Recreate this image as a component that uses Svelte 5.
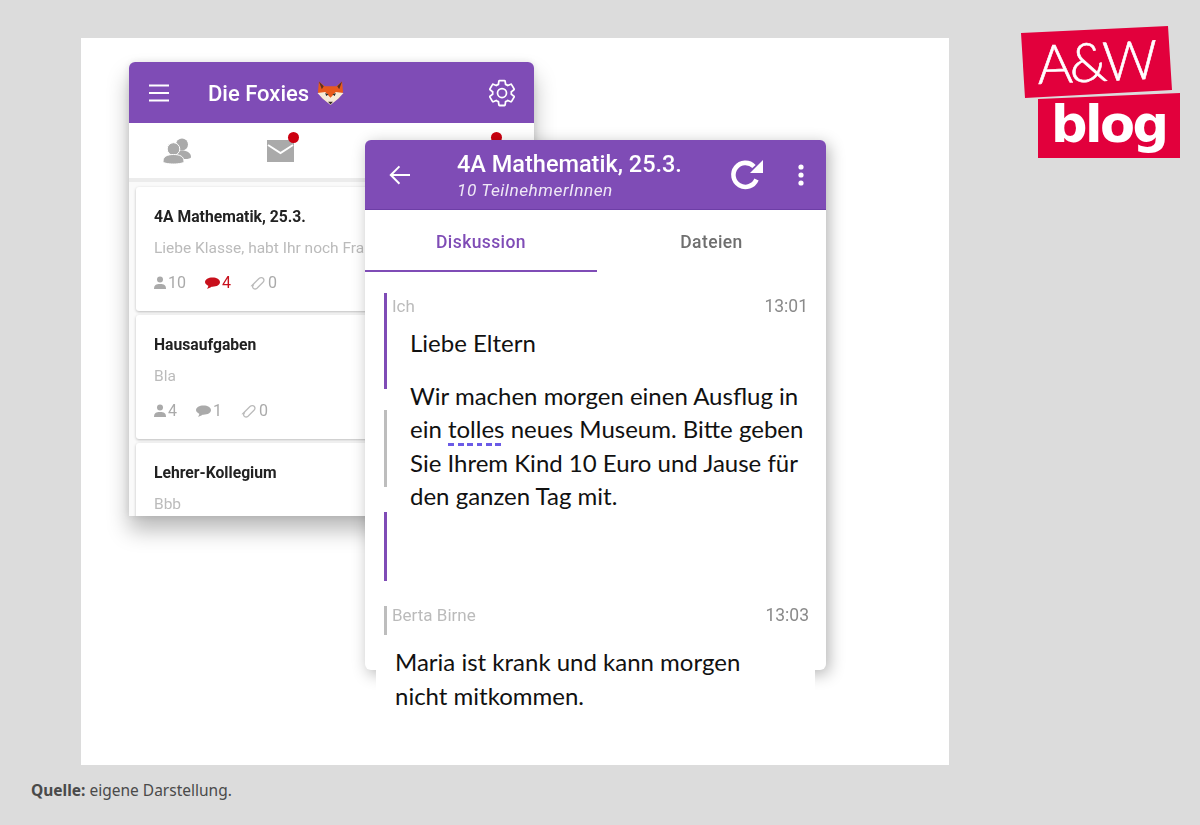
<script>
	const threads = [
		{ title: '4A Mathematik, 25.3.', text: 'Liebe Klasse, habt Ihr noch Fragen?', people: 10, chat: 4, files: 0, hot: true },
		{ title: 'Hausaufgaben', text: 'Bla', people: 4, chat: 1, files: 0, hot: false },
		{ title: 'Lehrer-Kollegium', text: 'Bbb' }
	];

	const bars = [
		{ top: 21, height: 96, cls: 'purple' },
		{ top: 138, height: 77, cls: 'grey' },
		{ top: 240, height: 69, cls: 'purple' },
		{ top: 334, height: 29, cls: 'grey' }
	];
</script>

<div class="page">
	<div class="panel">
		<section class="phone back">
			<header class="back-head">
				<svg class="burger" viewBox="0 0 20 18" width="20" height="18">
					<path d="M0 1.500h20M0 9h20M0 16.500h20" stroke="#fff" stroke-width="2" />
				</svg>
				<span class="back-title">Die Foxies</span>
				<svg class="fox" viewBox="0 0 28 26" width="27" height="26">
					<path d="M2 1l6 5h12l6-5 1 11-4 6-9 7-9-7-4-6z" fill="#e8591c" />
					<path d="M2 1l5 5-2 3zM26 1l-5 5 2 3z" fill="#5a3320" />
					<path d="M.500 13l8-1 5.500 6 5.500-6 8 1-5.500 6-8 6.500-8-6.500z" fill="#f7ead8" />
					<path d="M8.500 13l3.500 1.500-2.500 1.500zM19.500 13L16 14.500l2.500 1.500z" fill="#2b2b2b" />
					<path d="M11.500 22h5l-2.500 3z" fill="#3a2a24" />
				</svg>
				<svg class="gear" viewBox="0 0 24 24" width="30" height="30">
					<path
						d="M19.430 12.980c.040-.320.070-.640.070-.980s-.030-.660-.070-.980l2.110-1.650c.190-.150.240-.420.120-.640l-2-3.460c-.120-.220-.390-.300-.610-.220l-2.490 1c-.520-.400-1.080-.730-1.690-.980l-.380-2.650C14.460 2.180 14.250 2 14 2h-4c-.250 0-.460.180-.490.420l-.380 2.650c-.610.250-1.170.590-1.690.980l-2.490-1c-.230-.090-.490 0-.610.220l-2 3.460c-.130.220-.070.490.120.640l2.110 1.650c-.040.320-.070.650-.070.980s.030.660.070.980l-2.110 1.650c-.190.150-.240.420-.120.640l2 3.460c.120.220.390.300.610.220l2.490-1c.520.400 1.080.730 1.690.980l.380 2.650c.030.240.240.420.490.420h4c.250 0 .460-.180.490-.420l.380-2.650c.610-.250 1.170-.590 1.690-.980l2.490 1c.230.090.490 0 .610-.220l2-3.460c.120-.220.070-.490-.120-.640z"
						fill="none"
						stroke="#fff"
						stroke-width="1.400"
					/>
					<circle cx="12" cy="12" r="3.600" fill="none" stroke="#fff" stroke-width="1.400" />
				</svg>
			</header>

			<nav class="back-tabs">
				<span class="tab">
					<svg viewBox="0 0 28 26" width="28" height="26">
						<circle cx="19" cy="6.500" r="6" fill="#aaa" />
						<path d="M11 21c0-6 3-8.500 8-8.500s9 2.500 9 6.500c0 1.500-3 2-6 2z" fill="#aaa" />
						<circle cx="10.500" cy="11" r="6.300" fill="#aaa" stroke="#fff" stroke-width="1" />
						<path d="M0 23.500c0-5 4-7 10.500-7s10.500 2 10.500 7c0 1.500-4.500 2.500-10.500 2.500S0 25 0 23.500z" fill="#aaa" stroke="#fff" stroke-width="1" />
					</svg>
				</span>
				<span class="tab">
					<svg viewBox="0 0 28 22" width="28" height="22">
						<path d="M0 0h27v22H0z" fill="#aaa" />
						<path d="M1 5l12.500 8L26 5" fill="none" stroke="#fff" stroke-width="2" />
					</svg>
					<i class="dot"></i>
				</span>
				<span class="tab"></span>
				<span class="tab"><i class="dot"></i></span>
			</nav>

			<div class="threads">
				{#each threads as t}
					<article class="thread">
						<h3>{t.title}</h3>
						<p>{t.text}</p>
						{#if t.people}
							<div class="stats">
								<span class="stat">
									<svg viewBox="0 0 12 14" width="12" height="14" fill="#aaa">
										<circle cx="6" cy="3.500" r="3" />
										<path d="M0 13c0-4 2-5 6-5s6 1 6 5z" />
									</svg>
									{t.people}
								</span>
								<span class="stat" class:hot={t.hot}>
									<svg viewBox="0 0 16 12" width="15" height="12" fill="currentColor">
										<path d="M8 0c4.400 0 8 2 8 5s-3.600 5-8 5l-1-.050C5.500 11 3.500 12 2 12c1-.800 1.500-2 1.500-3C1.500 8 0 6.700 0 5c0-3 3.600-5 8-5z" />
									</svg>
									{t.chat}
								</span>
								<span class="stat">
									<svg viewBox="0 0 16 14" width="16" height="14" fill="none" stroke="#bbb" stroke-width="1.300">
										<path d="M2 9.500l7-7c1.500-1.300 3.500-1 4.300 0 .9 1.200.7 2.700-.3 3.700l-6 6c-1.200 1-2.500 1-3.500.3-1-.9-1-2.300-.5-3z" />
									</svg>
									{t.files}
								</span>
							</div>
						{/if}
					</article>
				{/each}
			</div>
		</section>

		<section class="phone front">
			<header class="front-head">
				<svg class="arrow" viewBox="0 0 24 24" width="30" height="30" fill="#fff">
					<path d="M20 11.200H6.600l5.500-5.600L11 4.500 3.500 12l7.500 7.500 1.100-1.100-5.500-5.600H20z" />
				</svg>
				<div class="front-titles">
					<h2>4A Mathematik, 25.3.</h2>
					<em>10 TeilnehmerInnen</em>
				</div>
				<svg class="reload" viewBox="0 0 34 34" width="34" height="34">
					<path d="M26.500 21.500A12 12 0 1 1 24 8.500" fill="none" stroke="#fff" stroke-width="4.600" />
					<path d="M33 2v13H20z" fill="#fff" />
				</svg>
				<svg class="more" viewBox="0 0 8 24" width="8" height="24" fill="#fff">
					<circle cx="4" cy="4" r="2.600" />
					<circle cx="4" cy="12" r="2.600" />
					<circle cx="4" cy="20" r="2.600" />
				</svg>
			</header>

			<nav class="front-tabs">
				<span class="active">Diskussion</span>
				<span>Dateien</span>
			</nav>

			<div class="messages">
				{#each bars as b}
					<i class="bar {b.cls}" style="top: {b.top}px; height: {b.height}px"></i>
				{/each}

				<div class="meta first"><span>Ich</span><time>13:01</time></div>
				<div class="body">
					<p>Liebe Eltern</p>
					<p class="para">
						Wir machen morgen einen Ausflug in<br />
						ein <span class="squiggle">tolles</span> neues Museum. Bitte geben<br />
						Sie Ihrem Kind 10 Euro und Jause für<br />
						den ganzen Tag mit.
					</p>
				</div>
				<div class="meta second"><span>Berta Birne</span><time>13:03</time></div>
			</div>
		</section>

		<div class="patch">
			<p>Maria ist krank und kann morgen<br />nicht mitkommen.</p>
		</div>
	</div>

	<p class="source"><b>Quelle:</b> eigene Darstellung.</p>

	<svg class="logo" viewBox="0 0 162 135" width="162" height="135">
		<polygon points="1,8 148,1 152,65 5,73" fill="#e2003c" />
		<polygon points="18,74 160,68 160,133 18,133" fill="#e2003c" />
		<text class="logo-top" x="18" y="59" transform="rotate(-2.700 18 59)">A&amp;W</text>
		<text class="logo-bottom" x="31" y="117">blog</text>
	</svg>
</div>

<style>
	:global(body) {
		background: #dcdcdc;
	}

	.page {
		position: relative;
		height: 825px;
		padding: 38px 0 0 81px;
		box-sizing: border-box;
		overflow: hidden;
		font-family: Roboto, sans-serif;
	}

	.panel {
		position: relative;
		width: 868px;
		height: 727px;
		background: #fff;
	}

	.source {
		margin: 15px 0 0 -50px;
		font-family: 'Noto Sans', sans-serif;
		font-size: 15.500px;
		line-height: 20px;
		color: #4a4a4a;
	}

	.source b {
		font-weight: 700;
	}

	.logo {
		position: absolute;
		left: 1020px;
		top: 25px;
		overflow: visible;
	}

	.logo-top {
		font-family: Lato, sans-serif;
		font-weight: 300;
		font-size: 54px;
		letter-spacing: -3px;
		fill: #fff;
		stroke: #fff;
		stroke-width: 0.6px;
	}

	.logo-bottom {
		font-family: 'DejaVu Sans', sans-serif;
		font-weight: 700;
		font-size: 51px;
		letter-spacing: -2.500px;
		fill: #fff;
	}

	.phone {
		position: absolute;
		background: #fff;
		overflow: hidden;
	}

	/* left window, the list of groups */
	.back {
		left: 48px;
		top: 24px;
		width: 405px;
		height: 454px;
		border-radius: 6px 6px 0 0;
		box-shadow: 0 14px 22px rgba(0, 0, 0, 0.28), 0 0 8px rgba(0, 0, 0, 0.1);
		display: flex;
		flex-direction: column;
		filter: blur(0.5px);
	}

	.back-head {
		height: 61px;
		flex: none;
		display: flex;
		align-items: center;
		padding: 0 16px 0 20px;
		background: #7f4cb6;
		color: #fff;
	}

	.back-title {
		margin: 1px 0 0 39px;
		font-size: 22px;
		font-weight: 500;
	}

	.fox {
		margin-left: 8px;
	}

	.gear {
		margin-left: auto;
		margin-right: 1px;
	}

	.back-tabs {
		height: 55px;
		flex: none;
		display: grid;
		grid-template-columns: repeat(4, 1fr);
		align-items: center;
		justify-items: center;
		border-bottom: 4px solid #ececec;
	}

	.tab {
		position: relative;
		display: flex;
	}

	.tab svg {
		display: block;
	}

	.tab:nth-child(1) {
		left: -3px;
	}

	.tab:nth-child(4) {
		width: 28px;
		height: 22px;
		left: 1px;
	}

	.dot {
		position: absolute;
		right: -4px;
		top: -8px;
		width: 11px;
		height: 11px;
		border-radius: 50%;
		background: #cc0010;
	}

	.threads {
		flex: 1;
		min-height: 0;
		overflow: hidden;
		padding: 5px 8px 0 7px;
		display: flex;
		flex-direction: column;
		gap: 4px;
		background: #fafafa;
	}

	.thread {
		flex: none;
		height: 124px;
		box-sizing: border-box;
		padding: 21px 18px 0;
		background: #fff;
		border-radius: 3px;
		box-shadow: 0 1px 3px rgba(0, 0, 0, 0.25);
	}

	.thread h3 {
		margin: 0;
		font-size: 15.700px;
		line-height: 18px;
		font-weight: 700;
		color: #222;
		white-space: nowrap;
	}

	.thread p {
		margin: 13px 0 0;
		font-size: 15.500px;
		line-height: 18px;
		color: #bbb;
		white-space: nowrap;
	}

	.stats {
		margin-top: 17px;
		display: flex;
		gap: 19px;
		font-size: 16px;
		line-height: 18px;
		color: #aaa;
	}

	.stat {
		display: flex;
		align-items: center;
		gap: 2px;
	}

	.stat.hot {
		color: #c8101c;
	}

	/* right window, the open discussion */
	.front {
		left: 284px;
		top: 102px;
		width: 461px;
		height: 530px;
		border-radius: 6px;
		box-shadow: 3px 4px 16px rgba(0, 0, 0, 0.3);
	}

	.front-head {
		height: 70px;
		display: flex;
		align-items: center;
		padding: 0 21px 0 20px;
		background: #7f4cb6;
		color: #fff;
		border-bottom: 1px solid #6d3ea6;
		box-sizing: border-box;
		filter: blur(0.4px);
	}

	.front-titles {
		margin: 3px 0 0 42px;
		display: flex;
		flex-direction: column;
	}

	.front-titles h2 {
		margin: 0;
		font-size: 23.500px;
		line-height: 28px;
		font-weight: 500;
		white-space: nowrap;
	}

	.front-titles em {
		font-size: 17.300px;
		line-height: 24px;
		color: #efe8f6;
		letter-spacing: 0.5px;
	}

	.reload {
		margin-left: auto;
		margin-right: 33px;
	}

	.front-tabs {
		display: grid;
		grid-template-columns: 232px 1fr;
		height: 62px;
		font-size: 17.500px;
		font-weight: 500;
		color: #6f6f6f;
		text-align: center;
		line-height: 64px;
		letter-spacing: 0.4px;
		filter: blur(0.4px);
	}

	.front-tabs .active {
		color: #7f4cb6;
		border-bottom: 2px solid #7f4cb6;
		box-sizing: border-box;
		height: 62px;
	}

	.messages {
		position: relative;
		padding: 24px 18px 0 27px;
	}

	.bar {
		position: absolute;
		left: 19px;
		width: 3px;
	}

	.bar.purple {
		background: #7f4cb6;
	}

	.bar.grey {
		background: #bdbdbd;
	}

	.meta {
		display: flex;
		justify-content: space-between;
		align-items: center;
		height: 20px;
		font-size: 17px;
		color: #bbb;
		filter: blur(0.4px);
	}

	.meta time {
		font-size: 17.500px;
		color: #8a8a8a;
	}

	.meta.second {
		position: absolute;
		left: 27px;
		right: 17px;
		top: 333px;
	}

	.body,
	.patch {
		font-family: Lato, sans-serif;
		font-size: 24px;
		line-height: 33.500px;
		color: #111;
		white-space: nowrap;
	}

	.body {
		margin: 10px 0 0 18px;
	}

	.body p,
	.patch p {
		margin: 0;
	}

	.body .para {
		margin-top: 19px;
	}

	.squiggle {
		background: repeating-linear-gradient(90deg, #6b5be6 0 6px, transparent 6px 9.500px) left bottom / 100% 3px no-repeat;
		padding-bottom: 3px;
	}

	.patch {
		position: absolute;
		left: 295px;
		top: 607px;
		width: 439px;
		height: 60px;
		background: #fff;
		box-sizing: border-box;
		padding: 0 0 0 19px;
	}
</style>
